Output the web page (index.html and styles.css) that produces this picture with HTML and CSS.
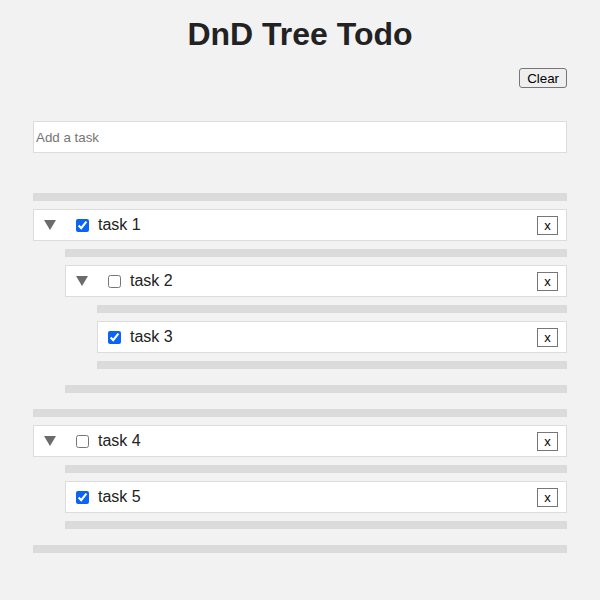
FILE: index.html
```html
<!DOCTYPE html>
<html>
<head>
<meta charset="utf-8">
<title>DnD Tree Todo</title>
<link rel="stylesheet" href="styles.css">
</head>
<body>
<div class="app">
  <h1 class="title">DnD Tree Todo</h1>
  <div class="toolbar"><button class="clear-btn">Clear</button></div>
  <input class="add-input" type="text" placeholder="Add a task">
  <div class="tree">
    <div class="drop"></div>
    <div class="item">
      <div class="row">
        <span class="toggle"><span class="tri"></span></span>
        <input class="check" type="checkbox" checked>
        <span class="label">task 1</span>
        <button class="del">x</button>
      </div>
      <div class="tree children">
        <div class="drop"></div>
        <div class="item">
          <div class="row">
            <span class="toggle"><span class="tri"></span></span>
            <input class="check" type="checkbox">
            <span class="label">task 2</span>
            <button class="del">x</button>
          </div>
          <div class="tree children">
            <div class="drop"></div>
            <div class="item">
              <div class="row">
                <input class="check" type="checkbox" checked>
                <span class="label">task 3</span>
                <button class="del">x</button>
              </div>
            </div>
            <div class="drop"></div>
          </div>
        </div>
        <div class="drop"></div>
      </div>
    </div>
    <div class="drop"></div>
    <div class="item">
      <div class="row">
        <span class="toggle"><span class="tri"></span></span>
        <input class="check" type="checkbox">
        <span class="label">task 4</span>
        <button class="del">x</button>
      </div>
      <div class="tree children">
        <div class="drop"></div>
        <div class="item">
          <div class="row">
            <input class="check" type="checkbox" checked>
            <span class="label">task 5</span>
            <button class="del">x</button>
          </div>
        </div>
        <div class="drop"></div>
      </div>
    </div>
    <div class="drop"></div>
  </div>
</div>
</body>
</html>
```

FILE: styles.css
```css
html, body {
  margin: 0;
  padding: 0;
  background: #f2f2f2;
}
body {
  font-family: "Liberation Sans", Arial, sans-serif;
  color: #222;
}
.app {
  padding: 16px 33px 0 33px;
}
.title {
  margin: 0 0 15px 0;
  font-size: 32px;
  font-weight: bold;
  text-align: center;
  color: #222;
  line-height: 37px;
}
.toolbar {
  display: flex;
  justify-content: flex-end;
  margin-bottom: 33px;
}
.clear-btn {
  font-family: "Liberation Sans", Arial, sans-serif;
  font-size: 13.33px;
  height: 20px;
  padding: 0 7px;
  margin: 0;
  background: #efefef;
  border: 1px solid #767676;
  border-radius: 3px;
  color: #000;
}
.add-input {
  display: block;
  box-sizing: border-box;
  width: 100%;
  height: 32px;
  margin: 0 0 40px 0;
  padding: 1px 2px;
  border: 1px solid #dcdcdc;
  background: #fff;
  font-family: "Liberation Sans", Arial, sans-serif;
  font-size: 13.33px;
  outline: none;
}
.add-input::placeholder {
  color: #757575;
}
.tree {
  display: flex;
  flex-direction: column;
  gap: 8px;
}
.children {
  margin-left: 32px;
  padding-bottom: 8px;
}
.item {
  display: flex;
  flex-direction: column;
  gap: 8px;
}
.drop {
  height: 8px;
  background: #dbdbdb;
}
.row {
  box-sizing: border-box;
  height: 32px;
  display: flex;
  align-items: center;
  padding: 0 8px;
  background: #fff;
  border: 1px solid #dcdcdc;
}
.toggle {
  width: 32px;
  display: flex;
  align-items: center;
  padding-left: 2px;
  box-sizing: border-box;
}
.tri {
  width: 0;
  height: 0;
  border-left: 6px solid transparent;
  border-right: 6px solid transparent;
  border-top: 10px solid #6b6b6b;
}
.check {
  width: 13px;
  height: 13px;
  margin: 0 9px 0 2px;
  accent-color: #0b63f6;
}
.label {
  flex: 1;
  font-size: 16px;
  color: #222;
}
.del {
  box-sizing: border-box;
  height: 19px;
  width: 21px;
  padding: 0;
  margin: 0;
  background: #fff;
  border: 1px solid #767676;
  border-radius: 0;
  font-family: "Liberation Sans", Arial, sans-serif;
  font-size: 13px;
  color: #000;
  line-height: 17px;
  text-align: center;
}
```
